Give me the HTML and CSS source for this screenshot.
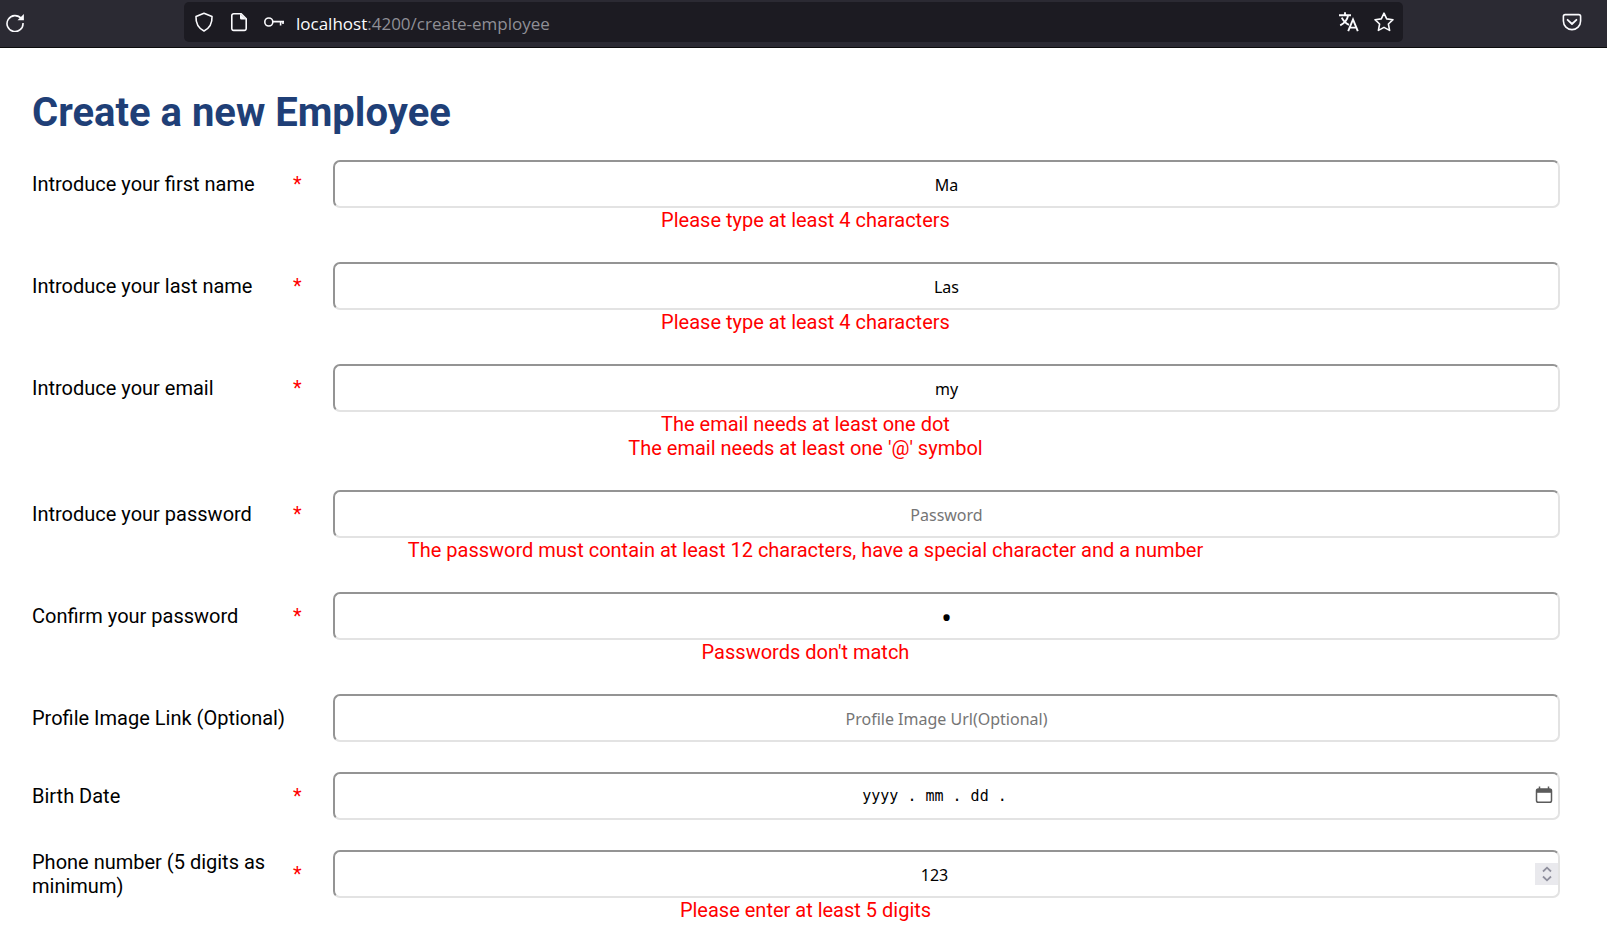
FILE: index.html
```html
<!DOCTYPE html>
<html lang="en">
<head>
<meta charset="utf-8">
<title>Create a new Employee</title>
<link rel="stylesheet" href="styles.css">
</head>
<body>
<header class="toolbar">
  <button class="tool reload" type="button" aria-label="Reload">
    <svg width="20" height="20" viewBox="0 0 20 20" fill="none" stroke="currentColor" stroke-width="1.6"><path d="M16.2 6.5A8 8 0 1 0 18 11"/><path d="M18.9 2v6.2h-6.4z" fill="currentColor" stroke="none"/></svg>
  </button>
  <div class="address">
    <svg width="20" height="20" viewBox="0 0 20 20" fill="none" stroke="currentColor" stroke-width="1.6" stroke-linejoin="round"><path d="M10 1.2 18 4.6c.3 6-2.200 11.400-8 14.400C4.200 16 1.700 10.600 2 4.600z"/></svg>
    <svg width="20" height="20" viewBox="0 0 20 20" fill="none" stroke="currentColor" stroke-width="1.6"><path d="M4.600 1.800h7.600l5 5v9.800a1.800 1.800 0 0 1-1.800 1.800H4.600a1.800 1.800 0 0 1-1.800-1.800V3.600a1.800 1.800 0 0 1 1.800-1.800z"/><path d="M11 1.800v4.400A1.400 1.400 0 0 0 12.400 7.600h4.800z" fill="currentColor" stroke="none"/></svg>
    <svg width="20" height="20" viewBox="0 0 20 20" fill="none" stroke="currentColor" stroke-width="1.600"><circle cx="4.800" cy="10" r="4"/><path d="M8.800 9.600H20M16.600 9.600v4M19 9.600v2.400"/></svg>
    <span class="url"><span class="host">localhost</span>:4200/create-employee</span>
    <button class="tool" type="button" aria-label="Translate">
      <svg width="20" height="20" viewBox="0 0 20 20" fill="none" stroke="currentColor" stroke-width="1.900"><path d="M0 3.200h12M6 .2v3M9.200 3.200C8.400 7.600 5.600 11.200 1.200 13.400M2.800 5.600c1.400 3.200 3.800 5.600 7.200 7.200"/><path d="m9.200 19.200 4.800-11.800 4.800 11.800M10.600 15.600h6.800"/></svg>
    </button>
    <button class="tool" type="button" aria-label="Bookmark">
      <svg width="20" height="20" viewBox="0 0 20 20" fill="none" stroke="currentColor" stroke-width="1.600" stroke-linejoin="round"><path d="m10 1.200 2.700 5.700 6.300.8-4.600 4.300 1.200 6.400L10 15.400l-5.600 3 1.200-6.400L1 7.700l6.300-.8z"/></svg>
    </button>
  </div>
  <button class="tool" type="button" aria-label="Save to Pocket">
    <svg width="20" height="20" viewBox="0 0 20 20" fill="none" stroke="currentColor" stroke-width="1.600" stroke-linecap="round" stroke-linejoin="round"><path d="M3.200 2.600h13.600a1.800 1.800 0 0 1 1.800 1.800V9a8.600 8.600 0 0 1-17.200 0V4.400a1.800 1.800 0 0 1 1.800-1.800z"/><path d="m5.600 7.800 4.400 4.200 4.400-4.200" stroke-width="1.800"/></svg>
  </button>
</header>
<main class="page">
  <h1 class="title">Create a new Employee</h1>
  <form class="form" novalidate>
    <div class="field">
      <div class="row"><label class="label" for="first">Introduce your first name</label><span class="star">*</span><input class="input" id="first" type="text" value="Ma"></div>
      <p class="error">Please type at least 4 characters</p>
    </div>
    <div class="field">
      <div class="row"><label class="label" for="last">Introduce your last name</label><span class="star">*</span><input class="input" id="last" type="text" value="Las"></div>
      <p class="error">Please type at least 4 characters</p>
    </div>
    <div class="field">
      <div class="row"><label class="label" for="email">Introduce your email</label><span class="star">*</span><input class="input" id="email" type="email" value="my"></div>
      <p class="error">The email needs at least one dot</p>
      <p class="error">The email needs at least one '@' symbol</p>
    </div>
    <div class="field">
      <div class="row"><label class="label" for="password">Introduce your password</label><span class="star">*</span><input class="input" id="password" type="password" placeholder="Password"></div>
      <p class="error">The password must contain at least 12 characters, have a special character and a number</p>
    </div>
    <div class="field">
      <div class="row"><label class="label" for="confirm">Confirm your password</label><span class="star">*</span><input class="input masked" id="confirm" type="password" value="a"></div>
      <p class="error">Passwords don't match</p>
    </div>
    <div class="field">
      <div class="row"><label class="label" for="image">Profile Image Link (Optional)</label><span class="star"></span><input class="input" id="image" type="text" placeholder="Profile Image Url(Optional)"></div>
    </div>
    <div class="field">
      <div class="row"><label class="label" for="birth">Birth Date</label><span class="star">*</span>
        <div class="control"><input class="input with-button date" id="birth" type="text" value="yyyy . mm . dd .">
          <button class="picker" type="button" aria-label="Open calendar"><svg width="18" height="18" viewBox="0 0 18 18" fill="none" stroke="currentColor" stroke-width="1.500"><rect x="1.500" y="3" width="15" height="13.200" rx="1.800"/><path d="M1.500 3h15v3.800h-15z" fill="currentColor" stroke="none"/><path d="M4.500 .6V4M13.500 .6V4"/></svg></button>
        </div>
      </div>
    </div>
    <div class="field">
      <div class="row"><label class="label" for="phone">Phone number (5 digits as minimum)</label><span class="star">*</span>
        <div class="control"><input class="input with-button" id="phone" type="number" value="123">
          <button class="stepper" type="button" aria-label="Change value"><svg width="10" height="16" viewBox="0 0 10 16" fill="none" stroke="currentColor" stroke-width="1.800"><path d="M1 5.500 5 1.700l4 3.800M1 10.500l4 3.800 4-3.800"/></svg></button>
        </div>
      </div>
      <p class="error">Please enter at least 5 digits</p>
    </div>
  </form>
</main>
</body>
</html>
```

FILE: styles.css
```css
* {
  box-sizing: border-box;
}

body {
  margin: 0;
  background: #fff;
  color: #000;
  font: 20px/24px Roboto, sans-serif;
}

.toolbar {
  display: flex;
  align-items: center;
  height: 48px;
  padding: 0 25px 4px 5px;
  border-bottom: 1px solid #0c0c0d;
  background: #2b2a33;
  color: #fbfbfe;
}

.toolbar svg {
  display: block;
  flex: none;
}

.tool {
  padding: 0;
  border: 0;
  background: none;
  color: inherit;
}

.reload {
  margin-right: 159px;
}

.address {
  display: flex;
  flex: 1;
  align-items: center;
  gap: 15px;
  height: 40px;
  margin-right: 159px;
  padding: 0 9px 0 10px;
  border-radius: 5px;
  background: #1c1b22;
}

.url {
  flex: 1;
  margin-left: -3px;
  padding-top: 4px;
  color: #8f8f96;
  font: 17px/24px "Open Sans", sans-serif;
}

.host {
  color: #fbfbfe;
}

.page {
  padding: 41px 47px 24px 32px;
}

.title {
  margin: 0 0 23px;
  color: #1f3f77;
  font-size: 40px;
  line-height: 48px;
}

.form {
  display: flex;
  flex-direction: column;
  gap: 30px;
}

.row {
  display: grid;
  grid-template-columns: 261px 8px 1fr;
  align-items: center;
}

.label {
  padding-right: 4px;
}

.star {
  color: red;
}

.input {
  width: 100%;
  height: 48px;
  margin: 0;
  padding: 1px 0 0;
  border: 2px solid;
  border-color: #949494 #e3e3e3 #e3e3e3 #949494;
  border-radius: 7px;
  outline: 0;
  background: #fff;
  color: #000;
  font: 16px/24px "Noto Sans", sans-serif;
  text-align: center;
  appearance: textfield;
}

.input::placeholder {
  color: #757575;
}

.row > .input,
.control {
  justify-self: end;
  width: calc(100% - 32px);
}

.control {
  position: relative;
  display: flex;
}

.with-button {
  padding-right: 24px;
}

.with-button::-webkit-inner-spin-button {
  appearance: none;
}

.masked {
  font-size: 28px;
}

.date {
  padding-top: 0;
  font-family: "DejaVu Sans Mono", monospace;
  font-size: 15px;
}

.picker,
.stepper {
  position: absolute;
  display: grid;
  place-items: center;
  padding: 0;
  border: 0;
}

.picker {
  top: 14px;
  right: 7px;
  background: none;
  color: #5b5b5b;
}

.stepper {
  top: 13px;
  right: 2px;
  width: 23px;
  height: 22px;
  background: #e9e9ed;
  color: #8f8f9d;
}

.error {
  margin: 0;
  padding-left: 19px;
  color: red;
  text-align: center;
}
```
